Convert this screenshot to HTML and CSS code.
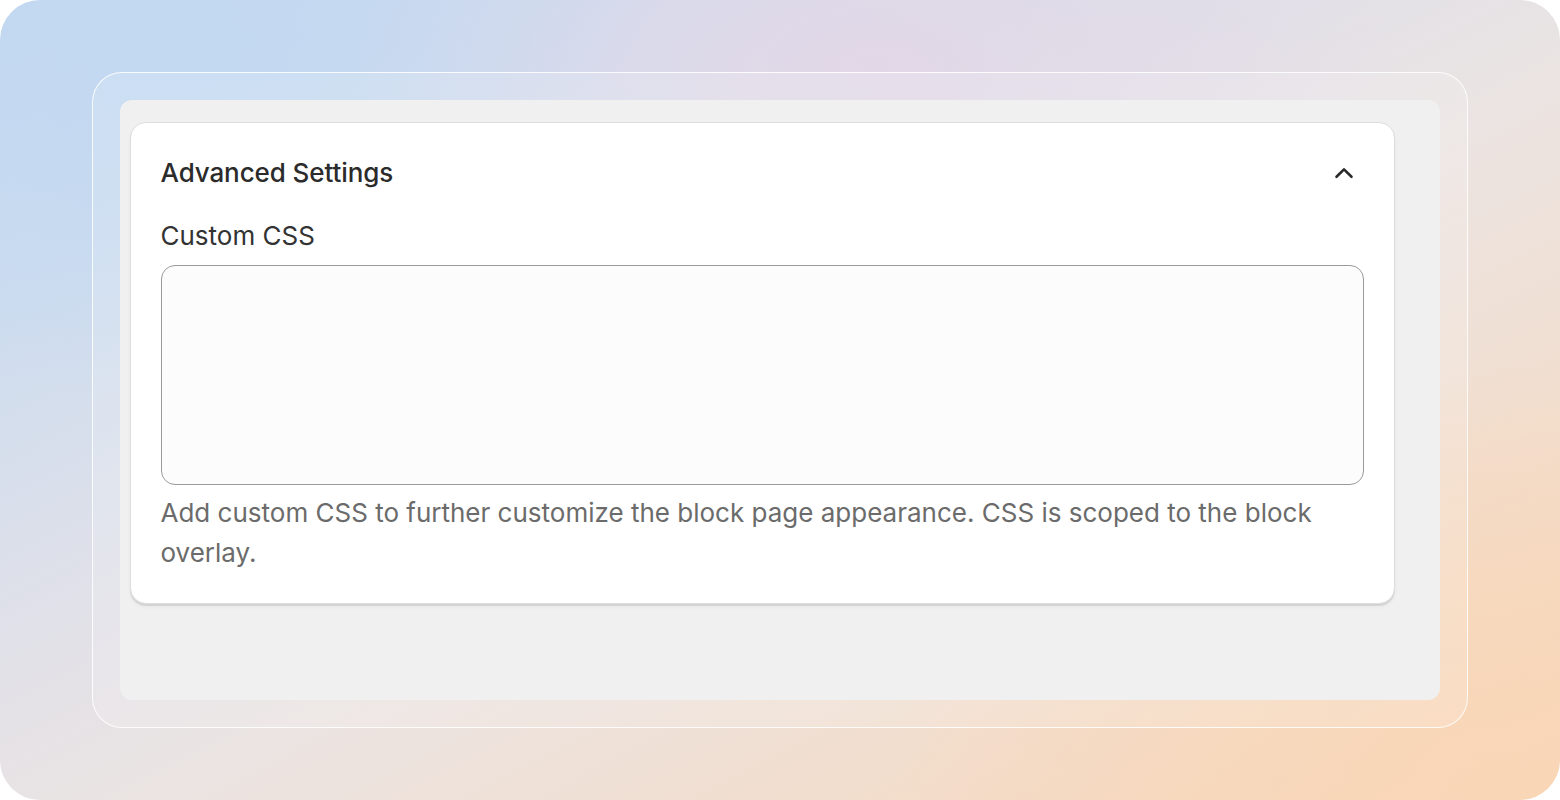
FILE: index.html
```html
<!DOCTYPE html>
<html lang="en">
<head>
<meta charset="utf-8">
<title>Advanced Settings</title>
<link rel="stylesheet" href="styles.css">
</head>
<body>
<div class="backdrop">
  <div class="frame">
    <div class="panel">
      <section class="card">
        <header class="card-header">
          <h2 class="card-title">Advanced Settings</h2>
          <button class="collapse-btn" aria-label="Collapse">
            <svg width="24" height="24" viewBox="0 0 24 24" fill="none" stroke="currentColor" stroke-width="2.6" stroke-linecap="round" stroke-linejoin="round"><path d="M4.5 15.8L12 8.4l7.5 7.4"/></svg>
          </button>
        </header>
        <label class="field-label" for="css">Custom CSS</label>
        <textarea id="css" class="field-input"></textarea>
        <p class="field-help">Add custom CSS to further customize the block page appearance. CSS is scoped to the block overlay.</p>
      </section>
    </div>
  </div>
</div>
</body>
</html>
```
FILE: styles.css
```css
* { box-sizing: border-box; }
html, body { margin: 0; padding: 0; background: #ffffff; }
body { font-family: Inter, "Noto Sans", "Liberation Sans", sans-serif; }

.backdrop {
  width: 1560px;
  height: 800px;
  border-radius: 40px;
  padding: 72px 92px;
  background:
    radial-gradient(ellipse 520px 260px at 56% 8%, rgba(228,214,230,0.85) 0%, rgba(228,214,230,0) 100%),
    radial-gradient(ellipse 600px 420px at 96% 98%, rgba(249,214,182,0.9) 0%, rgba(249,214,182,0) 100%),
    radial-gradient(ellipse 520px 340px at 12% 8%, rgba(194,216,241,0.9) 0%, rgba(194,216,241,0) 100%),
    linear-gradient(to bottom right, #c3d8f1 0%, #ccdcef 18%, #e2e1e8 42%, #ebe4e2 55%, #f2ddcc 78%, #f8d6b8 100%);
}

.frame {
  width: 1376px;
  height: 656px;
  border: 1.5px solid rgba(255,255,255,0.85);
  border-radius: 30px;
  padding: 26.5px;
  background: rgba(255,255,255,0.16);
}

.panel {
  width: 1320px;
  height: 600px;
  border-radius: 12px;
  background: #f0f0f0;
  padding: 22px 45px 0 10px;
}

.card {
  width: 1265px;
  background: #ffffff;
  border: 1px solid #dddddd;
  border-radius: 16px;
  box-shadow: 0 2px 0 rgba(0,0,0,0.09), 0 3px 4px rgba(0,0,0,0.04);
  padding: 30px 30px 30px 30px;
}

.card-header {
  display: flex;
  align-items: center;
  justify-content: space-between;
  height: 40px;
  margin-bottom: 23px;
}

.card-title {
  margin: 0;
  font-size: 26px;
  font-weight: 500;
  line-height: 40px;
  color: #2b2b2b;
  letter-spacing: -0.1px;
}

.collapse-btn {
  border: 0;
  background: none;
  padding: 0;
  margin-right: 8px;
  width: 24px;
  height: 24px;
  color: #2a2a2a;
  display: flex;
}

.field-label {
  display: block;
  font-size: 26px;
  line-height: 40px;
  color: #333333;
  margin-bottom: 9px;
}

.field-input {
  display: block;
  width: 1203px;
  height: 220px;
  border: 1px solid #9a9a9a;
  border-radius: 14px;
  background: #fcfcfc;
  resize: none;
  margin: 0;
  padding: 12px 16px;
  font-family: inherit;
  font-size: 20px;
}

.field-help {
  margin: 8px 0 0;
  font-size: 26px;
  line-height: 40px;
  color: #6b6b6b;
  max-width: 1203px;
}
```
